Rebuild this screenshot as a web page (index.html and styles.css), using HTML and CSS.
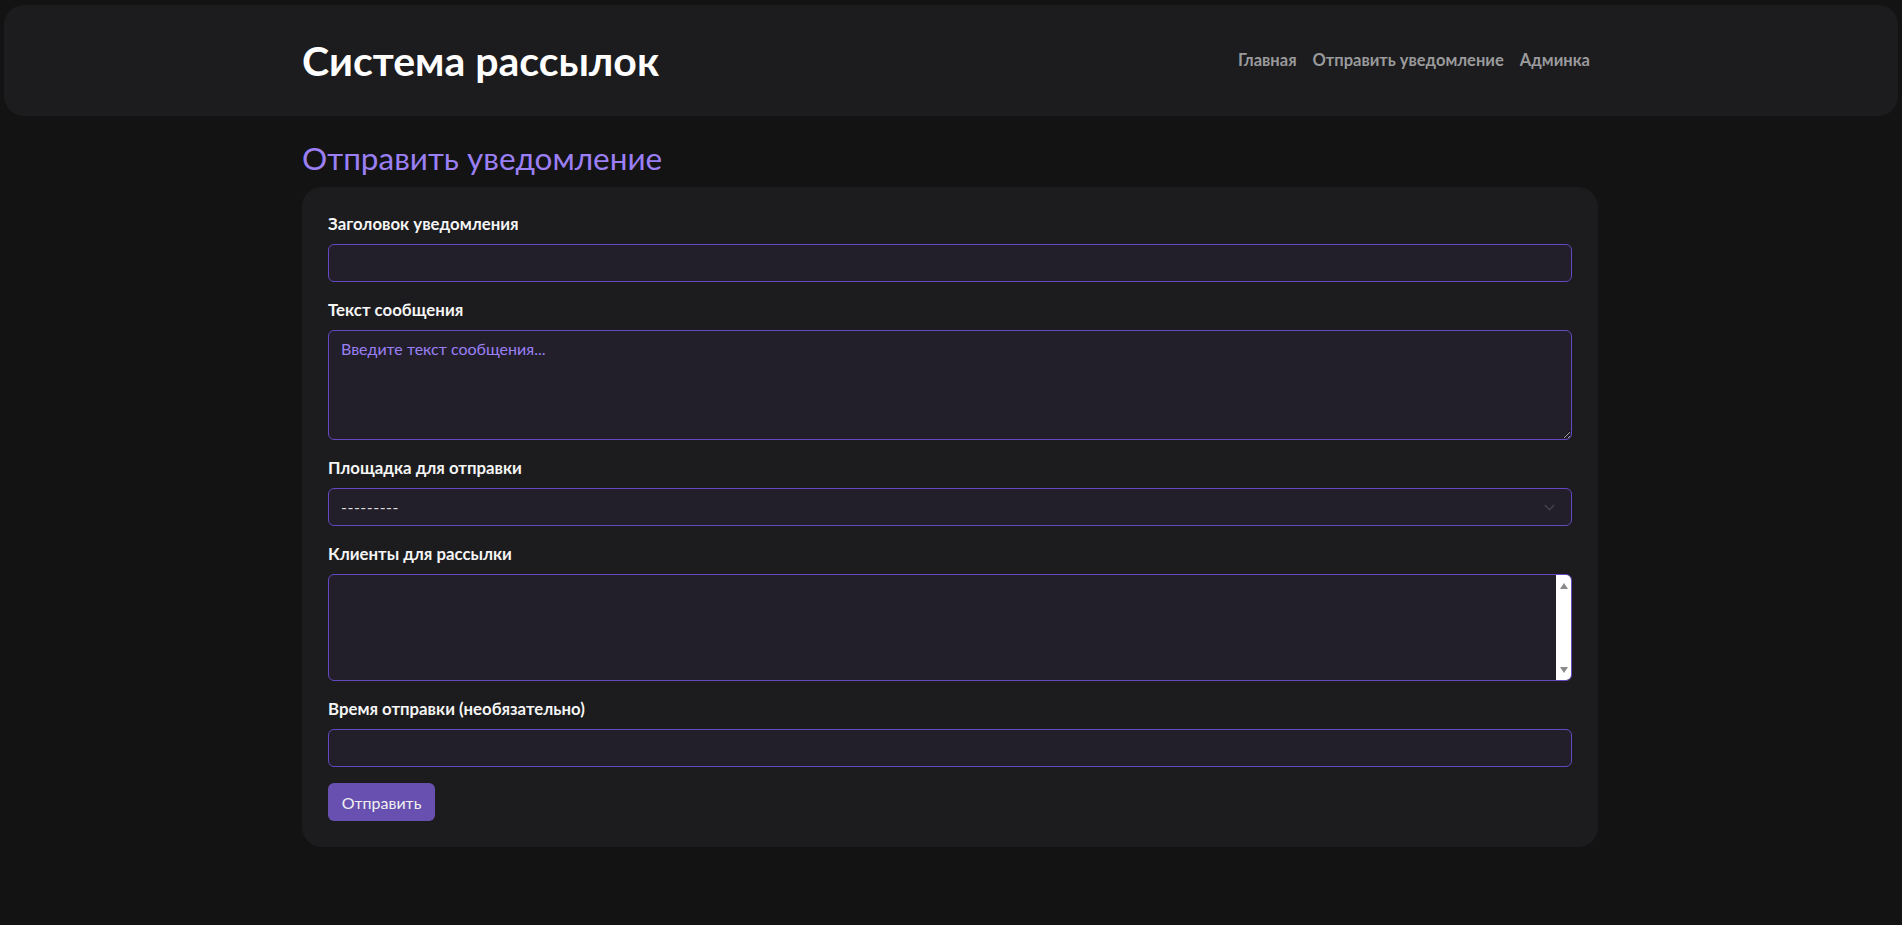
FILE: index.html
```html
<!DOCTYPE html>
<html lang="ru">
<head>
<meta charset="utf-8">
<title>Система рассылок</title>
<link rel="stylesheet" href="styles.css">
</head>
<body>
<header class="topbar">
  <div class="container topbar-inner">
    <h1 class="brand">Система рассылок</h1>
    <nav class="nav">
      <a href="#">Главная</a>
      <a href="#">Отправить уведомление</a>
      <a href="#">Админка</a>
    </nav>
  </div>
</header>
<main class="container">
  <h2 class="page-title">Отправить уведомление</h2>
  <form class="card">
    <div class="field">
      <label class="label">Заголовок уведомления</label>
      <input class="control" type="text">
    </div>
    <div class="field">
      <label class="label">Текст сообщения</label>
      <textarea class="control textarea" rows="4" placeholder="Введите текст сообщения..."></textarea>
    </div>
    <div class="field">
      <label class="label">Площадка для отправки</label>
      <div class="control select">
        <span>---------</span>
        <svg class="chev" width="11" height="7" viewBox="0 0 11 7"><path d="M0.8 1l4.7 4.7 4.7-4.7" fill="none" stroke="#45434f" stroke-width="1.4"/></svg>
      </div>
    </div>
    <div class="field">
      <label class="label">Клиенты для рассылки</label>
      <div class="control multi">
        <div class="multi-list"></div>
        <div class="fake-scroll">
          <span class="arrow up"></span>
          <span class="arrow down"></span>
        </div>
      </div>
    </div>
    <div class="field">
      <label class="label">Время отправки (необязательно)</label>
      <input class="control" type="text">
    </div>
    <button class="btn" type="button">Отправить</button>
  </form>
</main>
</body>
</html>
```
FILE: styles.css
```css
* { box-sizing: border-box; }
html, body { margin: 0; padding: 0; }
body {
  background: #131313;
  color: #f2f2f2;
  font-family: Lato, "Open Sans", sans-serif;
  font-size: 16px;
  line-height: 1.5;
}
.container {
  width: 1298px;
  padding-right: 2px;
  margin: 0 auto;
}
.topbar {
  margin: 5px 4px 0;
  height: 111px;
  background: #1c1c1e;
  border-radius: 20px;
  display: flex;
  align-items: center;
}
.topbar-inner {
  display: flex;
  align-items: center;
  justify-content: space-between;
}
.brand {
  margin: 0;
  font-size: 41px;
  font-weight: 700;
  line-height: 1.2;
  color: #ffffff;
}
.nav {
  display: flex;
  align-items: center;
}
.nav a {
  padding: 0 8px;
  color: #9a9a9c;
  text-decoration: none;
  font-weight: 700;
  font-size: 16.5px;
}
.page-title {
  margin: 24px 0 11px;
  font-size: 31.5px;
  font-weight: 400;
  line-height: 1.15;
  color: #9b7ff5;
}
.card {
  background: #1c1c1e;
  border-radius: 20px;
  padding: 25px 26px 26px;
  display: flex;
  flex-direction: column;
  align-items: flex-start;
}
.field {
  width: 100%;
  margin-bottom: 16px;
  display: flex;
  flex-direction: column;
}
.label {
  font-weight: 700;
  font-size: 16.8px;
  line-height: 24px;
  margin-bottom: 8px;
  color: #f5f5f5;
}
.control {
  width: 100%;
  height: 38px;
  background: #221f2b;
  border: 1px solid #6449c0;
  border-radius: 6px;
  padding: 6px 12px;
  color: #e0e0e0;
  font-family: inherit;
  font-size: 16px;
  line-height: 24px;
  outline: none;
}
.textarea {
  height: 110px;
  resize: vertical;
}
.textarea::placeholder {
  color: #9b7ff5;
  opacity: 1;
}
.select {
  display: flex;
  align-items: center;
  justify-content: space-between;
  padding-right: 16px;
}
.select span { color: #dcdcdc; letter-spacing: 0.5px; }
.chev { display: block; }
.multi {
  height: 107px;
  padding: 0;
  display: flex;
  overflow: hidden;
}
.multi-list { flex: 1; }
.fake-scroll {
  width: 15px;
  background: #ffffff;
  display: flex;
  flex-direction: column;
  justify-content: space-between;
  align-items: center;
  padding: 8px 0 7px;
}
.arrow {
  width: 0;
  height: 0;
  border-left: 4.5px solid transparent;
  border-right: 4.5px solid transparent;
}
.arrow.up { border-bottom: 6px solid #8a8a8a; }
.arrow.down { border-top: 6px solid #8a8a8a; }
.btn {
  height: 38px;
  width: 107px;
  background: #6750b0;
  color: #f0f0f0;
  border: 0;
  border-radius: 6px;
  font-family: inherit;
  font-size: 16px;
  padding: 0 12px;
}
```
